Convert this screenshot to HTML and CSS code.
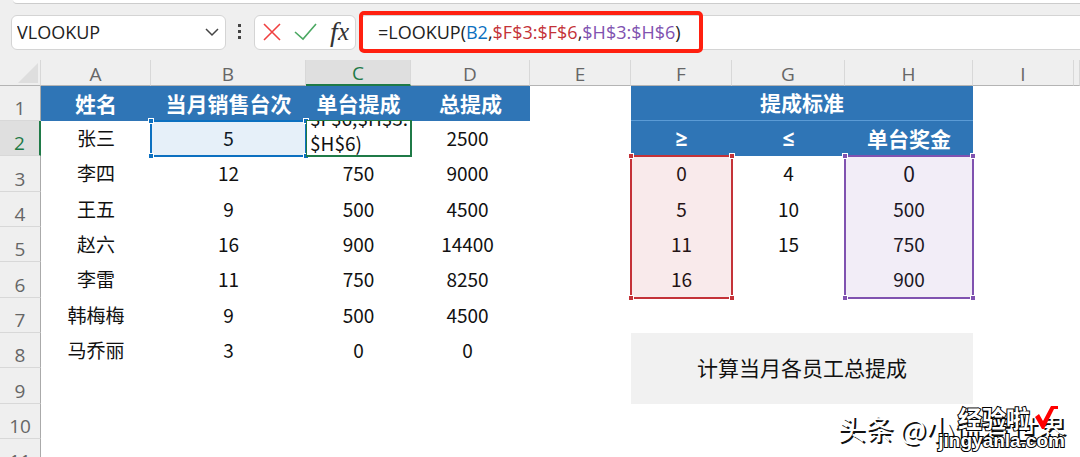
FILE: index.html
```html
<!DOCTYPE html>
<html lang="zh-CN">
<head>
<meta charset="utf-8">
<title>提成计算</title>
<link rel="stylesheet" href="styles.css">
</head>
<body>
<div class="app">
  <div class="ribbon"></div>
  <div class="formula-row">
    <div class="name-box">
      <input class="name-input" aria-label="名称框" value="VLOOKUP">
      <button class="icon-btn" aria-label="展开名称框"><svg width="16" height="10" viewBox="0 0 16 10"><path d="M2 2l6 6 6-6" fill="none" stroke="#444" stroke-width="1.5"/></svg></button>
    </div>
    <svg class="dots" width="4" height="16" viewBox="0 0 4 16"><path d="M0 0h3v3H0zM0 6h3v3H0zM0 12h3v3H0z" fill="#444"/></svg>
    <div class="actions">
      <button class="icon-btn" aria-label="取消"><svg width="18" height="18" viewBox="0 0 18 18"><path d="M1 1l16 16M17 1L1 17" fill="none" stroke="#f04040" stroke-width="1.6"/></svg></button>
      <button class="icon-btn" aria-label="输入"><svg width="24" height="18" viewBox="0 0 24 18"><path d="M1 9l8 7L22 1" fill="none" stroke="#4ba862" stroke-width="1.6"/></svg></button>
      <button class="icon-btn fx" aria-label="插入函数">f<span class="fx-x">x</span></button>
    </div>
    <div class="formula"><div class="highlight">=LOOKUP(<span class="ref-blue">B2</span>,<span class="ref-red">$F$3:$F$6</span>,<span class="ref-purple">$H$3:$H$6</span>)</div></div>
  </div>
  <table class="sheet">
    <colgroup><col class="w-head"><col class="w-a"><col class="w-b"><col class="w-c"><col class="w-d"><col class="w-e"><col class="w-f"><col class="w-g"><col class="w-h"><col class="w-i"><col></colgroup>
    <thead>
      <tr><th class="corner"><svg width="20" height="20" viewBox="0 0 20 20"><path d="M20 0v20H0z" fill="#dedede"/></svg></th><th>A</th><th>B</th><th class="active-col">C</th><th>D</th><th>E</th><th>F</th><th>G</th><th>H</th><th>I</th><th></th></tr>
    </thead>
    <tbody>
      <tr><th>1</th><td class="title">姓名</td><td class="title">当月销售台次</td><td class="title">单台提成</td><td class="title">总提成</td><td></td><td class="title divided" colspan="3">提成标准</td><td></td><td></td></tr>
      <tr><th class="active-row">2</th><td>张三</td><td class="anchor">5<div class="range blue"><i></i><i></i><i></i><i></i></div></td><td class="anchor"><div class="editor"><div>$F$6,$H$3:<br>$H$6)</div></div></td><td class="total">2500</td><td></td><td class="title sign">≥</td><td class="title sign">≤</td><td class="title">单台奖金</td><td></td><td></td></tr>
      <tr><th>3</th><td>李四</td><td>12</td><td>750</td><td class="total">9000</td><td></td><td class="anchor">0<div class="range red"><i></i><i></i><i></i><i></i></div></td><td>4</td><td class="anchor large">0<div class="range purple"><i></i><i></i><i></i><i></i></div></td><td></td><td></td></tr>
      <tr><th>4</th><td>王五</td><td>9</td><td>500</td><td class="total">4500</td><td></td><td>5</td><td>10</td><td>500</td><td></td><td></td></tr>
      <tr><th>5</th><td>赵六</td><td>16</td><td>900</td><td class="total">14400</td><td></td><td>11</td><td>15</td><td>750</td><td></td><td></td></tr>
      <tr><th>6</th><td>李雷</td><td>11</td><td>750</td><td class="total">8250</td><td></td><td>16</td><td></td><td>900</td><td></td><td></td></tr>
      <tr><th>7</th><td>韩梅梅</td><td>9</td><td>500</td><td class="total">4500</td><td></td><td></td><td></td><td></td><td></td><td></td></tr>
      <tr><th>8</th><td>马乔丽</td><td>3</td><td>0</td><td class="total">0</td><td></td><td class="note" colspan="3" rowspan="2">计算当月各员工总提成</td><td></td><td></td></tr>
      <tr><th>9</th><td></td><td></td><td></td><td></td><td></td><td></td><td></td></tr>
      <tr><th>10</th><td></td><td></td><td></td><td></td><td></td><td></td><td></td><td></td><td></td><td></td></tr>
      <tr><th>11</th><td></td><td></td><td></td><td></td><td></td><td></td><td></td><td></td><td></td><td></td></tr>
    </tbody>
  </table>
  <div class="byline">头条 @小侃看世界</div>
  <div class="stamp">
    <div class="stamp-top">经验啦<svg width="24" height="25" viewBox="0 0 24 25"><path d="M1 12l4-3 4 7L17 1h7v3h-4L10 24H8z" fill="#f00"/></svg></div>
    <div class="stamp-url">jingyanla.com</div>
  </div>
</div>
</body>
</html>
```
FILE: styles.css
```css
* { box-sizing: border-box; }
body {
  margin: 0;
  background: #fff;
  color: #111;
  font-family: "Noto Sans CJK SC", sans-serif;
  font-size: 19px;
}
.app { position: relative; height: 100vh; overflow: hidden; background: #efefef; }
.ribbon {
  height: 4px;
  margin-left: 13px;
  background: #fff;
  border-bottom: 1px solid #ccc;
  border-bottom-left-radius: 8px;
}
.formula-row { display: flex; align-items: center; height: 56px; padding: 0 0 0 11px; }
.name-box, .actions, .formula {
  display: flex;
  align-items: center;
  height: 35px;
  background: #fff;
  border: 1px solid #d4d4d4;
  border-radius: 6px;
}
.name-box { width: 215px; padding: 0 5px; }
.name-input {
  flex: 1;
  min-width: 0;
  padding: 0;
  border: 0;
  outline: 0;
  background: none;
  color: #222;
  font: 18px "Open Sans", sans-serif;
}
.icon-btn { display: flex; padding: 0; border: 0; background: none; color: #333; }
.dots { margin: 0 12px; }
.actions { width: 102px; padding: 0 6px 0 8px; justify-content: space-between; }
.fx { font: italic 28px/30px "Liberation Serif", serif; }
.fx-x { font-size: 25px; }
.formula { flex: 1; margin-left: 4px; border-right: 0; border-radius: 6px 0 0 6px; }
.highlight {
  flex: none;
  height: 42px;
  margin-left: -2px;
  padding: 0 18px 0 15px;
  border: 4px solid #ff2010;
  border-radius: 5px;
  font: 18px/34px "Open Sans", sans-serif;
  color: #222;
}
.ref-blue { color: #0c70c0; }
.ref-red { color: #c43238; }
.ref-purple { color: #8052b0; }

.sheet { width: 100%; table-layout: fixed; border-collapse: separate; border-spacing: 0; background: #fff; }
.w-head { width: 41px; }
.w-a { width: 110px; }
.w-b { width: 155px; }
.w-c { width: 105px; }
.w-d { width: 119px; }
.w-e, .w-f, .w-i { width: 101px; }
.w-g { width: 113px; }
.w-h { width: 128px; }
.sheet th {
  padding: 0;
  background: #efefef;
  color: #666;
  font: 400 19px/24px "Open Sans", sans-serif;
}
.sheet thead th { height: 26px; padding-top: 2px; line-height: 22px; border-right: 1px solid #d8d8d8; border-bottom: 1px solid #b4b4b4; }
.sheet thead .corner { padding: 0 2px 0 0; text-align: right; }
.corner svg { display: block; margin-left: auto; }
tbody tr { height: 35px; }
tbody tr:nth-child(3n) { height: 36px; }
tbody th { border-right: 1px solid #aaa; border-bottom: 1px solid #d8d8d8; }
.sheet tbody th { padding-top: 10px; }
.sheet thead .active-col { background: #dfdfdf; color: #1f7a47; border-bottom: 2px solid #1f7a47; }
.sheet .active-row { background: #dfdfdf; color: #1f7a47; border-right: 2px solid #1f7a47; }
.sheet td { padding: 0 0 2px; text-align: center; line-height: 28px; }
.sheet .total { padding-right: 6px; }
.sheet .title { background: #2f75b6; color: #fff; font-size: 21px; font-weight: bold; }
.sheet .sign { font-family: "Open Sans", sans-serif; }
.sheet .divided { border-bottom: 1px solid #5b9bd5; }
.sheet .large { font-size: 21px; }
.sheet .note { padding-bottom: 4px; background: #f1f1f1; font-size: 21px; }
.anchor { position: relative; }
.range { position: absolute; inset: -1px; border: 2px solid; }
.blue { color: #0c70c0; background: rgba(12, 112, 192, 0.1); }
.red { color: #c43238; background: rgba(196, 50, 56, 0.1); height: 144px; }
.purple { color: #8052b0; background: rgba(128, 82, 176, 0.1); height: 144px; }
.range i { position: absolute; width: 4px; height: 4px; background: currentColor; box-shadow: 0 0 0 1px #fff; }
.range i:nth-child(1) { top: -3px; left: -3px; }
.range i:nth-child(2) { top: -3px; right: -3px; }
.range i:nth-child(3) { bottom: -3px; left: -3px; }
.range i:nth-child(4) { bottom: -3px; right: -3px; }
.editor {
  position: absolute;
  inset: -1px -1px -1px 0;
  display: flex;
  align-items: flex-end;
  padding-left: 3px;
  overflow: hidden;
  background: #fff;
  border: 1px solid #1f7a47;
  border-width: 1px 2px 2px 1px;
  text-align: left;
  line-height: 25px;
}
.byline {
  position: absolute;
  right: 14px;
  bottom: 9px;
  color: #fff;
  font-size: 28px;
  line-height: 40px;
  text-shadow: 2px 2px 0 #111;
}
.stamp { position: absolute; right: 15px; bottom: 6px; color: #fff; font-weight: bold; }
.stamp-top, .stamp-url { -webkit-text-stroke: 2px #000; paint-order: stroke fill; }
.stamp-top { display: flex; justify-content: flex-end; gap: 4px; padding-right: 7px; font-size: 24px; line-height: 26px; }
.stamp-url { font: bold 19px/20px "Liberation Sans", sans-serif; text-align: right; }
```
